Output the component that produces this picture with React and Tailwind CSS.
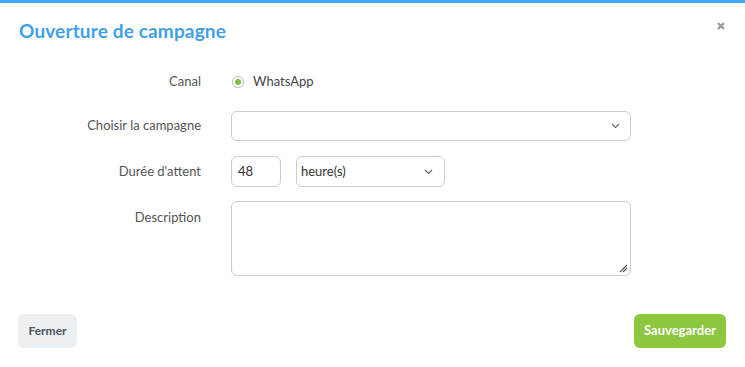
import React from 'react';

const font = { fontFamily: 'Lato, "Open Sans", sans-serif' };

const Chevron = () => (
  <svg width="9" height="6" viewBox="0 0 9 6" fill="none" stroke="#666" strokeWidth="1.1">
    <path d="M1 1l3.5 3.5L8 1" />
  </svg>
);

const Row = ({ label, top, className = '', children }) => (
  <div className={`flex ${top ? 'items-start' : 'items-center'} gap-[30px] ${className}`}>
    <div className={`w-[201px] shrink-0 text-right text-[13px] text-[#555] ${top ? 'pt-[7px]' : ''}`}>{label}</div>
    {children}
  </div>
);

export default function App() {
  return (
    <div className="w-[745px] h-[367px] bg-white border-t-[3px] border-[#42a5f5] relative" style={font}>
      <div className="flex items-center justify-between pl-[19px] pr-[20px] pt-[16px]">
        <h1 className="text-[19px] font-bold text-[#3fa0e8] leading-[24px] tracking-[0.15px]">Ouverture de campagne</h1>
        <svg className="-mt-[10px]" width="8" height="8" viewBox="0 0 8 8" stroke="#999" strokeWidth="2.2">
          <path d="M1 1l6 6M7 1L1 7" />
        </svg>
      </div>

      <div className="flex flex-col gap-[14px] mt-[24px]">
        <Row label="Canal">
          <div className="h-[30px] flex items-center gap-[9px]">
            <span className="w-[12px] h-[12px] rounded-full border border-[#bbb] flex items-center justify-center ml-[1px]">
              <span className="w-[6px] h-[6px] rounded-full bg-[#7cc242]" />
            </span>
            <span className="text-[13px] text-[#444]">WhatsApp</span>
          </div>
        </Row>
        <Row label="Choisir la campagne">
          <div className="w-[400px] h-[30px] border border-[#ccc] rounded-[6px] flex items-center justify-end pr-[10px]">
            <Chevron />
          </div>
        </Row>
        <Row label="Durée d'attent" className="mt-[1px]">
          <div className="flex items-center gap-[15px]">
            <div className="w-[50px] h-[31px] border border-[#ccc] rounded-[6px] flex items-center px-[6px] text-[13px] text-[#333]">48</div>
            <div className="w-[149px] h-[31px] border border-[#ccc] rounded-[6px] flex items-center justify-between pl-[4px] pr-[11px] text-[13px] text-[#333]">
              <span>heure(s)</span>
              <Chevron />
            </div>
          </div>
        </Row>
        <Row label="Description" top>
          <div className="w-[400px] h-[75px] border border-[#ccc] rounded-[6px] relative">
            <svg className="absolute right-[2px] bottom-[2px]" width="9" height="9" viewBox="0 0 9 9" stroke="#555" strokeWidth="1.2">
              <path d="M1 8L8 1M4 8L8 4" />
            </svg>
          </div>
        </Row>
      </div>

      <div className="flex items-center justify-between px-[18px] mt-[38px] pr-[19px]">
        <button className="h-[34px] w-[59px] rounded-[6px] bg-[#edf0f3] text-[#4a5560] text-[12px] font-bold">Fermer</button>
        <button className="h-[34px] w-[92px] rounded-[6px] bg-[#8dc63f] text-white text-[13px] font-bold">Sauvegarder</button>
      </div>
    </div>
  );
}
